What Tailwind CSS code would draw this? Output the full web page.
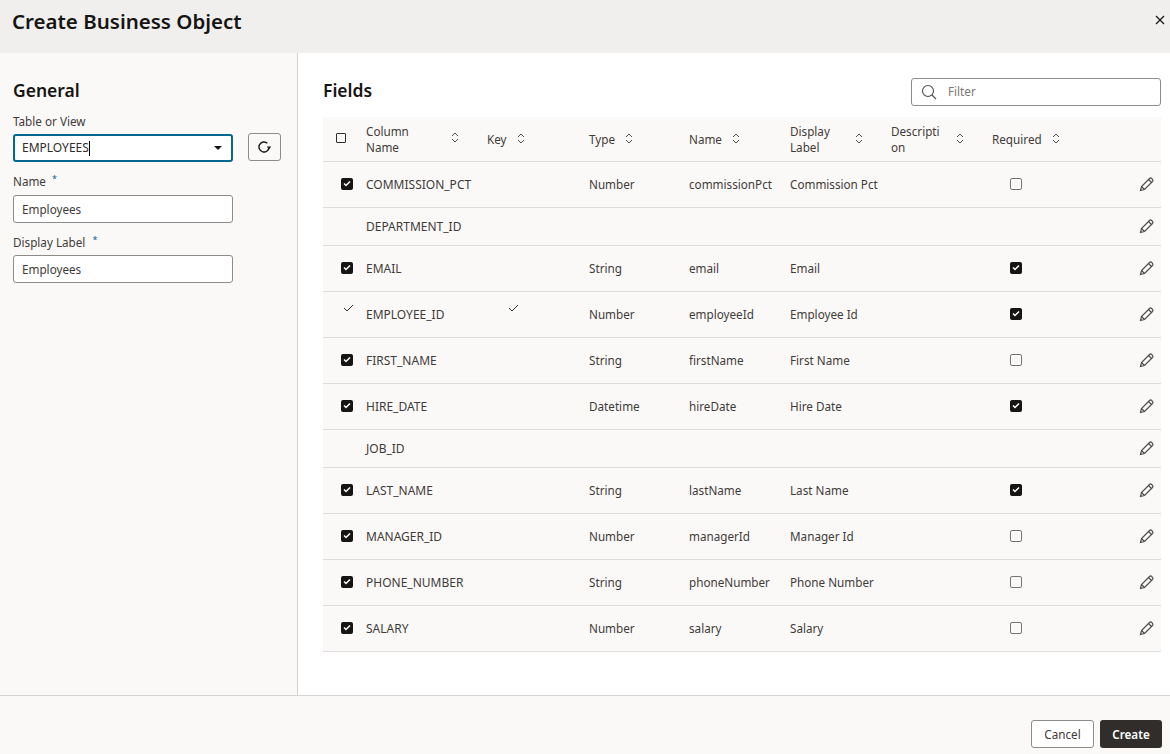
<!DOCTYPE html>
<html lang="en">
<head>
  <meta charset="UTF-8" />
  <meta name="viewport" content="width=device-width, initial-scale=1" />
  <title>Create Business Object</title>
  <script src="https://cdn.jsdelivr.net/npm/@tailwindcss/browser@4"></script>
</head>
<body class="h-[754px] w-[1170px] overflow-hidden bg-white font-['Noto_Sans',sans-serif] text-[#312d2a] flex flex-col">
  <!-- Header -->
  <header class="h-[53px] shrink-0 bg-[#f0efee] flex justify-between pl-3 pr-[5px]">
    <h1 class="text-[20.5px] leading-[28px] font-semibold text-[#161513] mt-[7px]">Create Business Object</h1>
    <svg class="mt-[15px]" width="10" height="10" viewBox="0 0 10 10" fill="none" stroke="#161513" stroke-width="1.2"><path d="M1 1l8 8M9 1l-8 8"/></svg>
  </header>

  <main class="flex-1 flex min-h-0">
    <!-- General -->
    <aside class="w-[298px] shrink-0 bg-[#fbf9f8] border-r border-[#d5d3d0] pl-[13px] pt-[25px]">
      <h2 class="text-[17.5px] leading-6 font-semibold text-[#161513]">General</h2>
      <label class="block h-4 text-[11.7px] leading-4 mt-[11px] text-[#3f3b38]">Table or View</label>
      <div class="flex gap-[15px] mt-[5px]">
        <div class="w-[220px] h-[28px] bg-white border-2 border-[#04678f] rounded-[3px] flex items-center justify-between pl-[7px] pr-[9px] text-[12px]">
          <span class="flex items-center">EMPLOYEES<span class="w-px h-[15px] bg-black"></span></span>
          <span class="border-x-[4px] border-t-[4px] border-x-transparent border-t-[#161513]"></span>
        </div>
        <button class="w-[33px] h-[28px] -mt-px border border-[#8e8b88] rounded-[3px] flex items-center justify-center">
          <svg width="14" height="14" viewBox="0 0 14 14" fill="none" stroke="#161513" stroke-width="1.4"><path d="M11 7a5 5 0 1 1-1.6-3.7"/><path d="M8.8 6.6h4.4l-2.2 2.8z" fill="#161513" stroke="none"/></svg>
        </button>
      </div>
      <label class="block h-4 text-[11.7px] leading-4 mt-[11px] text-[#3f3b38]">Name <span class="relative -top-[4px] left-[3px] text-[9px] text-[#04678f]">*</span></label>
      <input value="Employees" class="block w-[220px] h-[28px] mt-[6px] bg-white border border-[#8e8b88] rounded-[3px] px-[8px] text-[11.7px] text-[#3f3b38]" />
      <label class="block h-4 text-[11.7px] leading-4 mt-[11px] text-[#3f3b38]">Display Label <span class="relative -top-[4px] left-[4px] text-[9px] text-[#04678f]">*</span></label>
      <input value="Employees" class="block w-[220px] h-[28px] mt-[5px] bg-white border border-[#8e8b88] rounded-[3px] px-[8px] text-[11.7px] text-[#3f3b38]" />
    </aside>

    <!-- Fields -->
    <section class="flex-1 min-w-0 pl-[25px] pr-[9px] pt-[25px]">
      <div class="flex justify-between h-[39px]">
        <h2 class="text-[17.5px] leading-6 font-semibold text-[#161513]">Fields</h2>
        <div class="w-[250px] h-[28px] border border-[#8e8b88] rounded-[3px] flex items-center pl-[9px] gap-[11px]">
          <svg width="16" height="16" viewBox="0 0 16 16" fill="none" stroke="#4f4c49" stroke-width="1.1"><circle cx="7" cy="7" r="5.5"/><path d="M11 11l4 4"/></svg>
          <span class="text-[11.7px] text-[#7a7673]">Filter</span>
        </div>
      </div>

      <div id="table" class="text-[11.7px] leading-4 text-[#3f3b38]">
        <div class="grid grid-cols-[43px_121px_102px_100px_101px_101px_101px_1fr] h-[45px] items-center bg-[#fbf9f8] border-b border-[#dfdddb]">
          <span class="pl-[13px] -mt-[2px]"><span class="block w-[10px] h-[10px] border border-[#312d2a] rounded-[1px]"></span></span>
          <span class="flex items-center justify-between pr-[28px]"><span class="w-[50px]">Column Name</span><svg class="-mt-[3px]" width="8" height="11" viewBox="0 0 8 11" fill="none" stroke="#4f4c49" stroke-width="1"><path d="M1 4l3-3 3 3M1 7l3 3 3-3"/></svg></span>
          <span class="flex items-center gap-[10px]">Key <svg class="-mt-px" width="8" height="11" viewBox="0 0 8 11" fill="none" stroke="#4f4c49" stroke-width="1"><path d="M1 4l3-3 3 3M1 7l3 3 3-3"/></svg></span>
          <span class="flex items-center gap-[10px]">Type <svg class="-mt-px" width="8" height="11" viewBox="0 0 8 11" fill="none" stroke="#4f4c49" stroke-width="1"><path d="M1 4l3-3 3 3M1 7l3 3 3-3"/></svg></span>
          <span class="flex items-center gap-[10px]">Name <svg class="-mt-px" width="8" height="11" viewBox="0 0 8 11" fill="none" stroke="#4f4c49" stroke-width="1"><path d="M1 4l3-3 3 3M1 7l3 3 3-3"/></svg></span>
          <span class="flex items-center gap-[15px]"><span class="w-[50px]">Display Label</span><svg class="-mt-px" width="8" height="11" viewBox="0 0 8 11" fill="none" stroke="#4f4c49" stroke-width="1"><path d="M1 4l3-3 3 3M1 7l3 3 3-3"/></svg></span>
          <span class="flex items-center gap-[15px]"><span class="w-[50px] break-all">Description</span><svg class="-mt-px" width="8" height="11" viewBox="0 0 8 11" fill="none" stroke="#4f4c49" stroke-width="1"><path d="M1 4l3-3 3 3M1 7l3 3 3-3"/></svg></span>
          <span class="flex items-center gap-[10px]">Required <svg class="-mt-px" width="8" height="11" viewBox="0 0 8 11" fill="none" stroke="#4f4c49" stroke-width="1"><path d="M1 4l3-3 3 3M1 7l3 3 3-3"/></svg></span>
        </div>
      </div>
    </section>
  </main>

  <footer class="h-[59px] shrink-0 bg-[#fbf9f8] border-t border-[#d5d3d0] flex justify-end items-start gap-[6px] pt-[24px] pr-[8px]">
    <button class="w-[63px] h-[28px] pt-px bg-white border border-[#8e8b88] rounded-[3px] text-[11.7px] text-[#3f3b38]">Cancel</button>
    <button class="w-[62px] h-[28px] pt-px bg-[#312d2a] rounded-[3px] text-[11.7px] font-semibold text-white">Create</button>
  </footer>

  <script>
    const rows = [
      ["on", "COMMISSION_PCT", false, "Number", "commissionPct", "Commission Pct", false],
      [null, "DEPARTMENT_ID"],
      ["on", "EMAIL", false, "String", "email", "Email", true],
      ["tick", "EMPLOYEE_ID", true, "Number", "employeeId", "Employee Id", true],
      ["on", "FIRST_NAME", false, "String", "firstName", "First Name", false],
      ["on", "HIRE_DATE", false, "Datetime", "hireDate", "Hire Date", true],
      [null, "JOB_ID"],
      ["on", "LAST_NAME", false, "String", "lastName", "Last Name", true],
      ["on", "MANAGER_ID", false, "Number", "managerId", "Manager Id", false],
      ["on", "PHONE_NUMBER", false, "String", "phoneNumber", "Phone Number", false],
      ["on", "SALARY", false, "Number", "salary", "Salary", false],
    ];

    const tick = `<svg width="11" height="8" viewBox="0 0 11 8" fill="none" stroke="#312d2a" stroke-width="1"><path d="M1 4l3 3 6-6"/></svg>`;
    const checked = `<span class="flex items-center justify-center w-3 h-3 rounded-[2px] bg-[#161513]"><svg width="8" height="7" viewBox="0 0 8 7" fill="none" stroke="#fff" stroke-width="1.5"><path d="M1 3.5l2 2 4-4"/></svg></span>`;
    const unchecked = `<span class="block w-3 h-3 rounded-[2px] border border-[#7a7673] bg-[#fbf9f8]"></span>`;
    const pencil = `<svg width="16" height="16" viewBox="0 0 16 16" fill="none" stroke="#4f4c49" stroke-width="1.2"><path d="M1.5 14.5l1-4 8-8a1.6 1.6 0 0 1 2.2 0l.8.8a1.6 1.6 0 0 1 0 2.2l-8 8z"/><path d="M9.5 3.5l3 3M2.5 10.5l3 3"/></svg>`;

    const html = rows.map(([sel, col, key, type, name, label, req]) => {
      const short = sel === null;
      const left = sel === "on" ? `<span class="block -mt-[3px] pt-px">${checked}</span>` : sel === "tick" ? `<span class="block -mt-[11px] ml-[2px]">${tick}</span>` : "";
      const keyCell = key ? `<span class="block -mt-[11px] pl-[21px]">${tick}</span>` : "";
      const reqCell = short ? "" : req ? checked : unchecked;
      return `<div class="grid grid-cols-[43px_121px_102px_100px_101px_101px_101px_1fr] items-center bg-[#fbf9f8] border-b border-[#dfdddb] ${short ? "h-[38px]" : "h-[46px]"}">
        <span class="pl-[18px]">${left}</span>
        <span class="whitespace-nowrap text-[12px]">${col}</span>
        <span>${keyCell}</span>
        <span class="-mt-[2px]">${type || ""}</span>
        <span class="whitespace-nowrap -mt-[2px]">${name || ""}</span>
        <span class="whitespace-nowrap -mt-[2px]">${label || ""}</span>
        <span></span>
        <span class="flex items-center justify-between pl-[18px] pr-[6px]"><span class="-mt-[2px]">${reqCell}</span><span class="-mt-[2px]">${pencil}</span></span>
      </div>`;
    }).join("");
    document.getElementById("table").insertAdjacentHTML("beforeend", html);
  </script>
</body>
</html>
